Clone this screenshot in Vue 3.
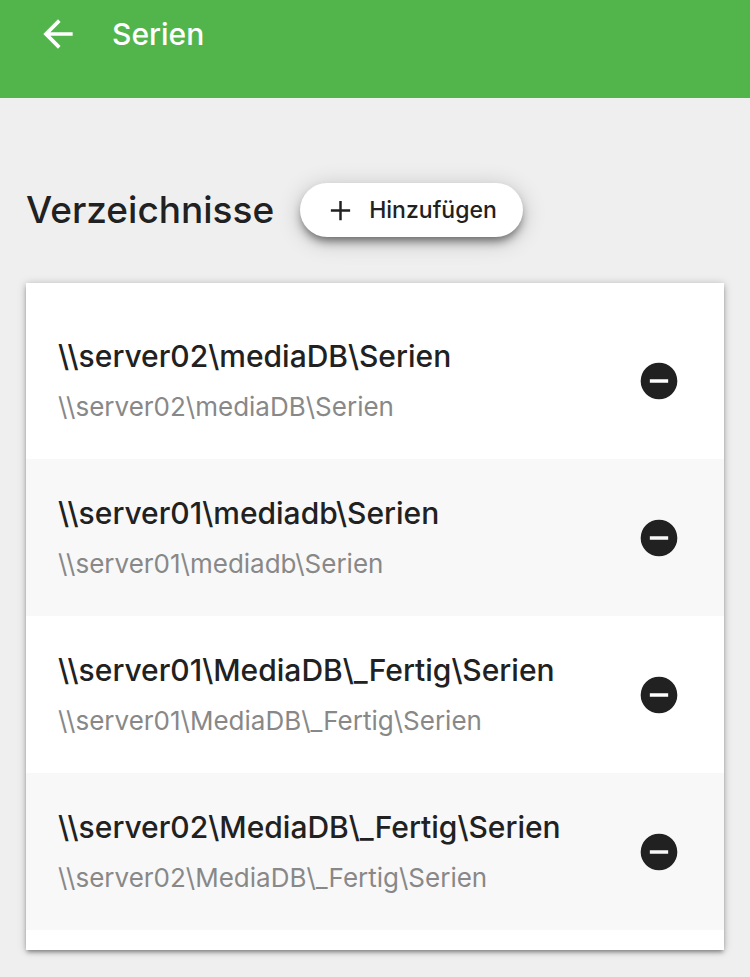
<script setup>
import { ref } from 'vue'

const folders = ref([
  '\\\\server02\\mediaDB\\Serien',
  '\\\\server01\\mediadb\\Serien',
  '\\\\server01\\MediaDB\\_Fertig\\Serien',
  '\\\\server02\\MediaDB\\_Fertig\\Serien',
])

function removeFolder(index) {
  folders.value.splice(index, 1)
}
</script>

<template>
  <div class="page">
    <header class="bar">
      <button class="back" type="button" aria-label="Zurück">
        <svg viewBox="0 0 24 24" width="44" height="44" aria-hidden="true">
          <path d="M20 11H7.830l5.590-5.590L12 4l-8 8 8 8 1.410-1.410L7.830 13H20z" fill="currentColor" />
        </svg>
      </button>
      <h1 class="title">Serien</h1>
    </header>
    <main class="content">
      <div class="heading">
        <h2 class="section-title">Verzeichnisse</h2>
        <button class="add" type="button">
          <svg viewBox="0 0 24 24" width="33" height="33" aria-hidden="true">
            <path d="M19 12.900h-6.100V19h-1.800v-6.100H5v-1.800h6.100V5h1.800v6.100H19z" fill="currentColor" />
          </svg>
          <span>Hinzufügen</span>
        </button>
      </div>
      <ul class="card">
        <li v-for="(folder, index) in folders" :key="folder" class="row">
          <div class="text">
            <div class="name">{{ folder }}</div>
            <div class="path">{{ folder }}</div>
          </div>
          <button class="remove" type="button" aria-label="Entfernen" @click="removeFolder(index)">
            <svg viewBox="0 0 24 24" width="44" height="44" aria-hidden="true">
              <path d="M12 2a10 10 0 1 0 0 20a10 10 0 0 0 0-20zM17 13H7v-2h10z" fill="currentColor" fill-rule="evenodd" />
            </svg>
          </button>
        </li>
      </ul>
    </main>
  </div>
</template>

<style>
body {
  margin: 0;
  background: #efefef;
}
</style>

<style scoped>
.page {
  font-family: Inter, "Liberation Sans", sans-serif;
  color: #212121;
}
button {
  border: 0;
  padding: 0;
  background: none;
  color: inherit;
  font: inherit;
  cursor: pointer;
}
svg {
  display: block;
}
.bar {
  display: flex;
  align-items: center;
  gap: 32px;
  padding: 12px 36px 42px;
  background: #52b54b;
  color: #fff;
}
.title {
  margin: 0;
  font-size: 30px;
  line-height: 40px;
  font-weight: 500;
}
.content {
  padding: 85px 26px 26px;
}
.heading {
  display: flex;
  align-items: center;
  gap: 26px;
}
.section-title {
  margin: 0;
  font-size: 37px;
  line-height: 54px;
  font-weight: 500;
}
.add {
  display: flex;
  align-items: center;
  gap: 12px;
  height: 54px;
  padding: 0 26px 0 24px;
  border-radius: 27px;
  background: #fff;
  font-size: 23px;
  line-height: 28px;
  font-weight: 500;
  box-shadow: 0 6px 10px -2px rgba(0, 0, 0, 0.5), 0 4px 24px rgba(0, 0, 0, 0.2);
}
.card {
  margin: 46px 0 0;
  padding: 19px 0 20px;
  list-style: none;
  background: #fff;
  box-shadow: 0 3px 4px -1px rgba(0, 0, 0, 0.35), 0 1px 8px rgba(0, 0, 0, 0.25);
}
.row {
  display: flex;
  align-items: center;
  justify-content: space-between;
  padding: 32px 43px 32px 32px;
}
.row:nth-child(even) {
  background: #f8f8f8;
}
.name {
  font-size: 30px;
  line-height: 44px;
  font-weight: 500;
}
.path {
  margin-top: 9px;
  font-size: 26px;
  line-height: 40px;
  color: #888;
}
</style>
